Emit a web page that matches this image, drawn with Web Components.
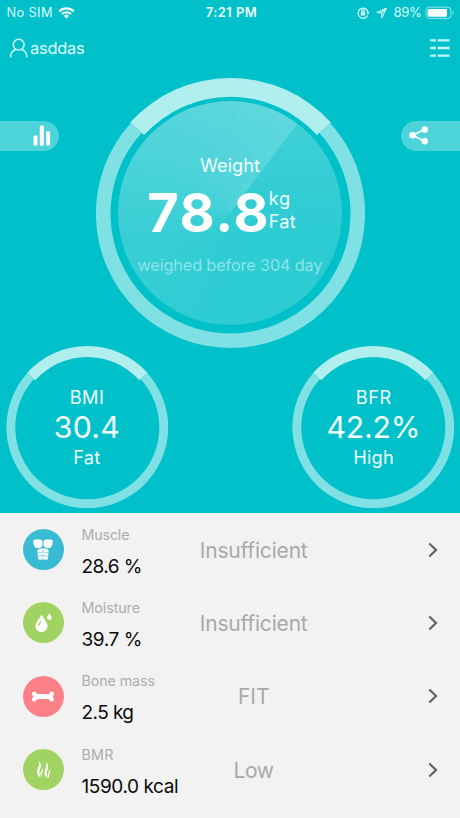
<!DOCTYPE html>
<html lang="en">
<head>
<meta charset="utf-8">
<title>Body scale</title>
<style>
  html, body { margin: 0; padding: 0; }
  body { width: 460px; height: 818px; overflow: hidden; background: #f2f2f2; font-family: Inter, "Liberation Sans", sans-serif; }
</style>
</head>
<body>
<scale-app></scale-app>
<script>
const define = (name, html, setup) => {
  const tpl = document.createElement('template');
  tpl.innerHTML = html;
  customElements.define(name, class extends HTMLElement {
    connectedCallback() {
      if (this.shadowRoot) return;
      this.attachShadow({ mode: 'open' }).append(tpl.content.cloneNode(true));
      if (setup) setup(this, this.shadowRoot);
    }
  });
};

/* One line of text whose tracking is adjusted to fill a given width. */
define('fit-text', `
  <style>
    :host { display: block; white-space: nowrap; width: max-content; font-kerning: normal; }
    span { display: inline-block; }
  </style><span></span>`, (el, root) => {
  const span = root.querySelector('span');
  const text = el.getAttribute('text');
  span.textContent = text;
  el.style.fontSize = el.getAttribute('size') + 'px';
  const w = parseFloat(el.getAttribute('w'));
  const ls = (w - span.getBoundingClientRect().width) / (text.length - 1);
  span.style.letterSpacing = ls.toFixed(3) + 'px';
  span.style.marginRight = (-ls).toFixed(3) + 'px';
});

define('status-bar', `
  <style>
    :host { display: grid; grid-template-columns: 1fr auto 1fr; align-items: center; height: 24px; padding: 0 5px 0 6.5px; line-height: 25px; color: #dcfafa; }
    .l, .r { display: flex; align-items: center; }
    .r { justify-content: flex-end; }
    svg { display: block; flex: none; }
    .time { font-weight: 600; color: #e8fdfd; padding-left: 1px; }
  </style>
  <div class="l">
    <fit-text text="No SIM" size="12.8" w="46"></fit-text>
    <svg style="margin-left:5px" width="17" height="12" viewBox="0 0 17 12" fill="none" stroke="#f2ffff" stroke-width="2.1">
      <path d="M1.2 4.4A10.4 10.4 0 0 1 15.8 4.4"/><path d="M3.9 7.1A6.6 6.6 0 0 1 13.1 7.1"/>
      <path d="M8.5 11.6L5.9 8.9A3.7 3.7 0 0 1 11.1 8.9Z" fill="#f2ffff" stroke="none"/>
    </svg>
  </div>
  <fit-text class="time" text="7:21 PM" size="13" w="51"></fit-text>
  <div class="r">
    <svg width="13" height="12" viewBox="0 0 13 12" fill="none" stroke="#dcfafa" stroke-width="1.2">
      <path d="M10.6 8.4A5 5 0 1 1 11 5.2"/><path d="M9.3 5.2h3.3L11 7.6z" fill="#dcfafa" stroke="none"/>
      <rect x="3.9" y="5.3" width="4.2" height="3.2" fill="#dcfafa" stroke="none"/><path d="M4.7 5.5V4.2a1.3 1.3 0 0 1 2.6 0v1.3"/>
    </svg>
    <svg style="margin-left:6px" width="12" height="12" viewBox="0 0 12 12" fill="none" stroke="#dcfafa" stroke-width="1.1" stroke-linejoin="round">
      <path d="M10.2 1.2L1.2 5.4l4.2.6.6 4.6z"/><path d="M5.4 6l4.8-4.8"/>
    </svg>
    <fit-text style="margin-left:6px" text="89%" size="13.2" w="28.5"></fit-text>
    <svg style="margin-left:3px" width="30" height="14" viewBox="0 0 30 14">
      <rect x=".9" y="1.2" width="25" height="11.2" rx="3" fill="none" stroke="#8be5e8" stroke-width="1"/>
      <rect x="2.6" y="2.9" width="19.4" height="7.8" rx="1.4" fill="#fff"/>
      <path d="M27.4 4.8c1.5.5 1.5 3.5 0 4z" fill="#8be5e8"/>
    </svg>
  </div>`);

define('nav-bar', `
  <style>
    :host { display: flex; align-items: center; justify-content: space-between; height: 48px; padding: 0 10px 0 9px; color: #e2fbfb; line-height: 48px; }
    .user { display: flex; align-items: center; gap: 2px; }
    svg { display: block; }
  </style>
  <div class="user">
    <svg width="19" height="21" viewBox="0 0 19 21" fill="none" stroke="#c9f5f6" stroke-width="1.5">
      <circle cx="9.7" cy="6.7" r="5.4"/><path d="M1.7 19.500V17.500C2.3 14.3 4.6 12.2 7 11.600M12.4 11.600C14.8 12.200 17.1 14.300 17.7 17.500V19.500"/>
    </svg>
    <fit-text text="asddas" size="16.4" w="54.7"></fit-text>
  </div>
  <svg style="margin-top:-1px" width="20" height="20" viewBox="0 0 20 20" fill="#c4f5f6">
    <path d="M0 1.2h5.8v2.4H0zM7.6 1.2h12v2.4h-12zM0 8.8h5.8v2.4H0zM7.6 8.8h12v2.4h-12zM0 16.4h5.8v2.4H0zM7.6 16.4h12v2.4h-12z"/>
  </svg>`);

define('side-pill', `
  <style>
    :host { display: flex; align-items: center; width: 59.3px; height: 29.7px; background: #4dd3da; box-sizing: border-box; }
    :host([side=left]) { border-radius: 0 15px 15px 0; justify-content: flex-end; padding-right: 8px; }
    :host([side=right]) { border-radius: 15px 0 0 15px; padding-left: 8px; }
  </style><slot></slot>`);

/* Ring with a highlighted arc at the top; slotted content is centred on it. */
define('ring-gauge', `
  <style>
    :host { display: grid; }
    svg, .disk, .content { grid-area: 1 / 1; }
    svg { display: block; }
    .content { display: flex; flex-direction: column; align-items: center; justify-content: center; }
    .disk { place-self: center; border-radius: 50%; }
  </style>
  <svg></svg><div class="disk"></div><div class="content"><slot></slot></div>`, (el, root) => {
  const n = k => parseFloat(el.getAttribute(k));
  const R = n('outer'), r = n('inner'), hR = n('arc-outer'), hr = n('arc-inner'), S = n('box'), c = S / 2;
  const a = 47.8 * Math.PI / 180, s = Math.sin(a), k = Math.cos(a);
  const sector = (o, i, large, dir) =>
    `M${c - o * s} ${c - o * k}A${o} ${o} 0 ${large} ${dir} ${c + o * s} ${c - o * k}L${c + i * s} ${c - i * k}A${i} ${i} 0 ${large} ${1 - dir} ${c - i * s} ${c - i * k}Z`;
  const svg = root.querySelector('svg');
  svg.setAttribute('width', S); svg.setAttribute('height', S); svg.setAttribute('viewBox', `0 0 ${S} ${S}`);
  svg.innerHTML = `<path d="${sector(R, r, 1, 0)}" fill="#80e1e5"/><path d="${sector(hR, hr, 0, 1)}" fill="#b1efee"/>`;
  if (el.hasAttribute('disk')) {
    const d = root.querySelector('.disk');
    d.style.width = d.style.height = n('disk') * 2 + 'px';
    d.style.background = 'conic-gradient(from 37deg, rgba(255,255,255,0) 0deg, rgba(255,255,255,.02) 150deg, rgba(255,255,255,.16) 360deg), linear-gradient(#42d1d7, #2bcbd2 60%, #2acbd2)';
  }
});

define('metric-row', `
  <style>
    :host { display: grid; grid-template-columns: 41px 1fr 130px 1fr auto; align-items: center; height: 73.3px; padding: 0 22px 0 22.5px; box-sizing: border-box; }
    .icon { width: 41px; height: 41px; border-radius: 50%; background: var(--tint); display: grid; place-items: center; }
    .info { padding: 2px 0 0 18px; line-height: 31.8px; width: 0; }
    .state { display: grid; justify-items: center; line-height: 30px; color: #a9a9a9; padding: 2px 0 0 16px; }
    .name { color: #adadad; } .val { color: #0b0b0b; }
    svg { display: block; }
  </style>
  <div class="icon"><slot></slot></div>
  <div class="info"></div>
  <div class="state"></div>
  <span></span>
  <svg width="10" height="16" viewBox="0 0 10 16" fill="none" stroke="#666" stroke-width="2.3"><path d="M1.3 1.5L8 8L1.3 14.5"/></svg>`, (el, root) => {
  const g = k => el.getAttribute(k);
  root.querySelector('.info').innerHTML =
    `<fit-text class="name" text="${g('name')}" size="14.3" w="${g('nw')}"></fit-text><fit-text class="val" text="${g('val')}" size="19" w="${g('vw')}"></fit-text>`;
  root.querySelector('.state').innerHTML = `<fit-text text="${g('state')}" size="21" w="${g('sw')}"></fit-text>`;
});

define('scale-app', `
  <style>
    :host { display: block; width: 460px; height: 818px; overflow: hidden; background: #f2f2f2; }
    .hero { height: 513px; background: #00c1ca; color: #f2ffff; box-sizing: border-box; }
    .main { display: grid; grid-template-columns: 1fr 271px 1fr; padding-top: 5.5px; height: 268px; font-weight: 400; }
    side-pill { margin-top: 43.5px; }
    side-pill[side=right] { justify-self: end; }
    .lower { display: flex; justify-content: space-between; padding: 0 5.2px 0 5.5px; }
    .reading { display: flex; align-items: center; margin-left: -17px; }
    .unit { line-height: 23px; margin-top: -6px; }
    .t1 { line-height: 30px; margin-top: 8px; }
    .big { font-weight: 700; line-height: 66px; color: #fff; }
    .ago { line-height: 38px; color: #8ce5e8; }
    .s { line-height: 30.3px; }
    .v { line-height: 30px; font-weight: 400; }
    svg { display: block; }
  </style>
  <div class="hero">
    <status-bar></status-bar>
    <nav-bar></nav-bar>
    <div class="main">
      <side-pill side="left">
        <svg width="18" height="21" viewBox="0 0 18 21" fill="#fff"><rect x=".5" y="10.5" width="4" height="10.2" rx="1.2"/><rect x="6.8" y=".4" width="4" height="20.3" rx="1.2"/><rect x="13.1" y="6.2" width="4" height="14.5" rx="1.2"/></svg>
      </side-pill>
      <ring-gauge box="271" outer="134.6" inner="120" arc-outer="135.5" arc-inner="116.7" disk="112">
        <fit-text class="t1" text="Weight" size="18.2" w="60"></fit-text>
        <div class="reading">
          <fit-text class="big" text="78.8" size="54" w="121.5"></fit-text>
          <div class="unit"><fit-text text="kg" size="18.2" w="21.5"></fit-text><fit-text text="Fat" size="18.2" w="27"></fit-text></div>
        </div>
        <fit-text class="ago" text="weighed before 304 day" size="16.3" w="185"></fit-text>
      </ring-gauge>
      <side-pill side="right">
        <svg width="20" height="19" viewBox="0 0 20 19" fill="#fff"><path d="M15.6 3.4L3.6 9.2L15.6 15.2" fill="none" stroke="#fff" stroke-width="1.7"/><circle cx="3.6" cy="9.2" r="3.3"/><circle cx="15.8" cy="3.5" r="3.2"/><circle cx="15.8" cy="15.2" r="3.2"/></svg>
      </side-pill>
    </div>
    <div class="lower">
      <ring-gauge box="162.6" outer="80.9" inner="72" arc-outer="81.2" arc-inner="70.2">
        <fit-text class="s" text="BMI" size="18.2" w="34"></fit-text>
        <fit-text class="v" text="30.4" size="30.3" w="66"></fit-text>
        <fit-text class="s" text="Fat" size="18.2" w="27"></fit-text>
      </ring-gauge>
      <ring-gauge box="162.6" outer="80.9" inner="72" arc-outer="81.2" arc-inner="70.2">
        <fit-text class="s" text="BFR" size="18.2" w="35.5"></fit-text>
        <fit-text class="v" text="42.2%" size="30.3" w="94"></fit-text>
        <fit-text class="s" text="High" size="18.2" w="40.5"></fit-text>
      </ring-gauge>
    </div>
  </div>
  <metric-row style="--tint:#39bcd3" name="Muscle" nw="48" val="28.6 %" vw="61" state="Insufficient" sw="108">
    <svg width="20" height="21" viewBox="0 0 20 21" fill="#fff"><path d="M2 .4H7.400Q9.500.6 9.500 2.600V6.500Q8.700 8.900 6.300 8.900H3.400Q1.400 8.500.900 6.300L.100 2.600Q.200.800 2 .4zM18 .4H12.600Q10.500.6 10.500 2.600V6.500Q11.300 8.900 13.700 8.900H16.600Q18.600 8.500 19.100 6.300L19.900 2.600Q19.800.800 18 .4z"/><path d="M5 10.500L9.600 9.600V12.500L4.600 13.500zM15 10.500L10.400 9.600V12.500L15.400 13.500zM4.800 14.500L9.600 13.500V16L5.100 16.800zM15.200 14.500L10.400 13.500V16L14.900 16.800zM5.200 17.800L9.600 17V20.300H5.400zM14.800 17.800L10.400 17V20.300H14.600z" stroke="#fff" stroke-width=".5" stroke-linejoin="round"/></svg>
  </metric-row>
  <metric-row style="--tint:#a0d362" name="Moisture" nw="58.500" val="39.7 %" vw="61" state="Insufficient" sw="108">
    <svg width="17" height="20" viewBox="0 0 17 20" fill="#fff"><path d="M6.600 1.200C8 5 12.600 9.500 12.600 13.600A6.200 6.100 0 0 1 .300 13.600C.300 9.500 5.200 5 6.600 1.200z"/><path d="M14.300.300C14.800 1.900 16.700 3 16.700 4.700A2.300 2.300 0 0 1 12.100 4.700C12.100 3 13.800 1.900 14.300.300z"/><path d="M6.300 7.200C4.500 9.200 2.800 11.200 3 13.700C4.200 11.800 6.300 10.500 6.300 7.200z" fill="#a0d362"/></svg>
  </metric-row>
  <metric-row style="--tint:#fc8087" name="Bone mass" nw="73.500" val="2.5 kg" vw="52.5" state="FIT" sw="31.500">
    <svg width="24" height="11" viewBox="0 0 24 11" fill="#fff"><rect x="3" y="3" width="18" height="5"/><circle cx="3.300" cy="2.700" r="2.300"/><circle cx="3.300" cy="8.200" r="2.300"/><circle cx="20.700" cy="2.700" r="2.300"/><circle cx="20.700" cy="8.200" r="2.300"/><path d="M2 3.500H5.500L8 4V7L5 9H2zM22 3.500H18.500L16 4V7L19 9H22z"/></svg>
  </metric-row>
  <metric-row style="--tint:#a0d362" name="BMR" nw="32" val="1590.0 kcal" vw="97" state="Low" sw="40.500">
    <svg width="15" height="20" viewBox="0 0 15 20" fill="#fff"><path d="M2.500.500C5 3 5.500 5.500 4.300 8.500C3.300 11 2.800 13.500 4.800 18C1.500 15.500.300 12.500 1.400 9.500C2.500 6.500 3.700 4 2.500.500zM6.600 7.500C7.300 9.500 6.800 11 6.200 12.500C5.700 14 5.400 15.300 5.800 17.200C4.300 15.500 4 13.700 4.800 12C5.500 10.500 6.400 9.300 6.600 7.500z"/><path transform="translate(7.300 1.200)" d="M2.500.500C5 3 5.500 5.500 4.300 8.500C3.300 11 2.800 13.500 4.800 18C1.500 15.500.300 12.500 1.400 9.500C2.500 6.500 3.700 4 2.500.500zM6.600 7.500C7.300 9.500 6.800 11 6.200 12.500C5.700 14 5.400 15.300 5.800 17.200C4.300 15.500 4 13.700 4.800 12C5.500 10.500 6.400 9.300 6.600 7.500z"/></svg>
  </metric-row>`);
</script>
</body>
</html>
